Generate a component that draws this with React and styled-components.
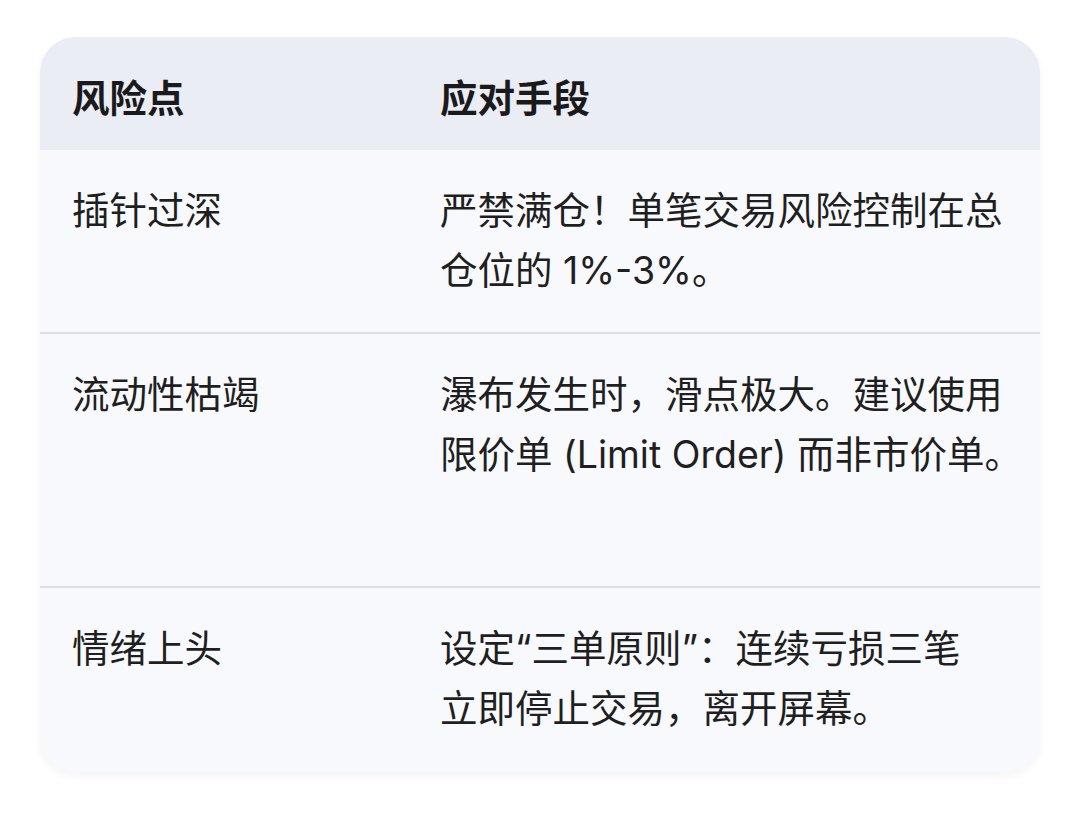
import React from 'react'
import styled, { createGlobalStyle } from 'styled-components'

const GlobalStyle = createGlobalStyle`
	html, body {
		margin: 0;
		padding: 0;
		background: #ffffff;
	}
	body {
		font-family: Inter, 'Noto Sans CJK SC', 'Noto Sans', sans-serif;
		color: #1d1d1f;
	}
`

const rows = [
	{
		risk: '插针过深',
		lines: ['严禁满仓！单笔交易风险控制在总', '仓位的 1%-3%。'],
		extra: 0,
	},
	{
		risk: '流动性枯竭',
		lines: ['瀑布发生时，滑点极大。建议使用', '限价单 (Limit Order) 而非市价单。'],
		extra: 70,
	},
	{
		risk: '情绪上头',
		lines: ['设定“三单原则”：连续亏损三笔', '立即停止交易，离开屏幕。'],
		extra: 2,
	},
]

const Page = styled.div`
	padding: 37px 40px 40px;
`

const Card = styled.div`
	width: 1000px;
	border-radius: 36px;
	overflow: hidden;
	background: #f8f9fc;
	box-shadow: 0 4px 10px rgba(30, 40, 70, 0.05);
`

const Row = styled.div`
	display: grid;
	grid-template-columns: 400px 1fr;
	border-top: ${(p) => (p.divider ? '2px solid #dcdfe4' : 'none')};
`

const HeadRow = styled(Row)`
	background: #eaedf3;
	height: 113px;
	align-items: center;
`

const HeadCell = styled.div`
	padding: 10px 32px 0;
	font-size: 37.5px;
	font-weight: 700;
	line-height: 44px;
	color: #1a1a1c;

	& + & {
		padding-left: 0;
	}
`

const Cell = styled.div`
	padding: 31px 32px ${(p) => 31 + (p.extra || 0)}px;
	font-size: 37.5px;
	line-height: 60px;
	font-weight: 400;
	color: #1f1f21;

	& + & {
		padding-left: 0;
	}
`

const Line = styled.span`
	display: block;
	white-space: nowrap;
`

const App = () => {
	return (
		<Page>
			<GlobalStyle />
			<Card>
				<HeadRow>
					<HeadCell>风险点</HeadCell>
					<HeadCell>应对手段</HeadCell>
				</HeadRow>
				{rows.map((row, i) => (
					<Row key={row.risk} divider={i > 0}>
						<Cell extra={row.extra}>{row.risk}</Cell>
						<Cell extra={row.extra}>
							{row.lines.map((line) => (
								<Line key={line}>{line}</Line>
							))}
						</Cell>
					</Row>
				))}
			</Card>
		</Page>
	)
}

export default App
